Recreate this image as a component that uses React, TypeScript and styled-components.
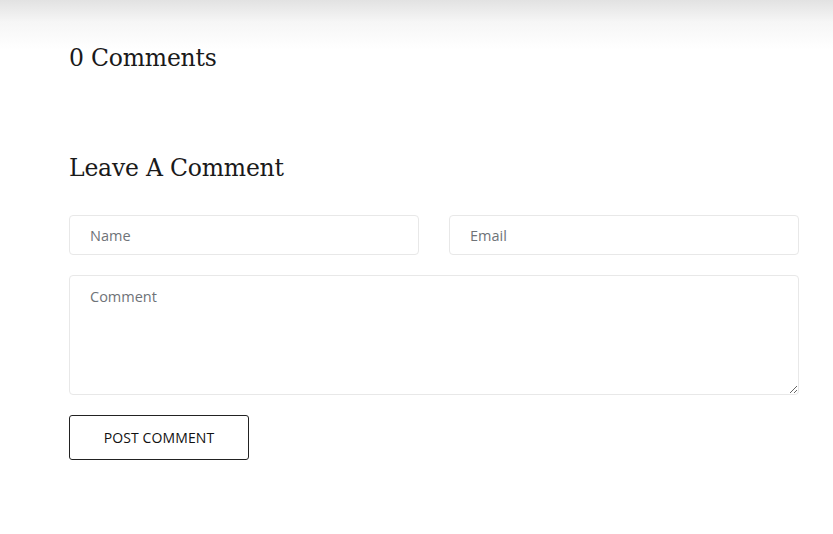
import React from "react";
import styled, { createGlobalStyle } from "styled-components";

const Global = createGlobalStyle`
  html, body { margin: 0; padding: 0; background: #fff; }
  * { box-sizing: border-box; }
`;

const Page = styled.div`
  min-height: 534px;
  background: linear-gradient(to bottom, #e2e2e2 0px, #f6f6f6 22px, #ffffff 50px);
  padding: 41px 34px 0 69px;
`;

const Section = styled.section`
  width: 730px;
`;

const Heading = styled.h3<{ $gap?: number }>`
  margin: 0 0 ${(p) => p.$gap ?? 0}px 0;
  font-family: "DejaVu Serif", "Liberation Serif", serif;
  font-weight: 400;
  font-size: 23.5px;
  line-height: 34px;
  color: #1a1a1a;
  letter-spacing: -0.2px;
`;

const Form = styled.form`
  display: flex;
  flex-direction: column;
  gap: 20px;
`;

const Row = styled.div`
  display: grid;
  grid-template-columns: 1fr 1fr;
  gap: 30px;
`;

const fieldCss = `
  width: 100%;
  border: 1px solid #e8e8e8;
  border-radius: 4px;
  background: #fff;
  font-family: "Open Sans", "Inter", sans-serif;
  font-size: 14.5px;
  color: #333;
  padding: 0 20px;
  outline: none;
  &::placeholder { color: #6f7378; }
`;

const Input = styled.input`
  ${fieldCss}
  height: 40px;
`;

const TextArea = styled.textarea`
  ${fieldCss}
  height: 120px;
  padding-top: 11px;
  resize: vertical;
  display: block;
`;

const Button = styled.button`
  width: 180px;
  height: 45px;
  border: 1px solid #222;
  border-radius: 3px;
  background: #fff;
  color: #111;
  font-family: "Open Sans", "Inter", sans-serif;
  font-size: 14px;
  text-transform: uppercase;
  letter-spacing: 0.1px;
  cursor: pointer;
`;

export default function App() {
  return (
    <>
      <Global />
      <Page>
        <Section>
          <Heading $gap={76}>0 Comments</Heading>
          <Heading $gap={30}>Leave A Comment</Heading>
          <Form onSubmit={(e) => e.preventDefault()}>
            <Row>
              <Input placeholder="Name" />
              <Input placeholder="Email" />
            </Row>
            <TextArea placeholder="Comment" />
            <div>
              <Button type="submit">Post Comment</Button>
            </div>
          </Form>
        </Section>
      </Page>
    </>
  );
}
